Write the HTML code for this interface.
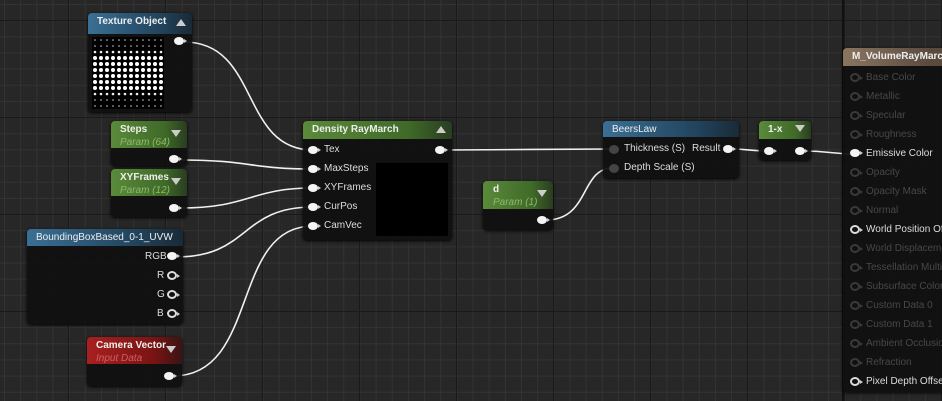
<!DOCTYPE html>
<html><head><meta charset="utf-8"><style>
*{margin:0;padding:0;box-sizing:border-box}
body{width:942px;height:401px;overflow:hidden;position:relative;font-family:"Liberation Sans",sans-serif;font-size:10px;color:#ddd;
background-color:#272727;
background-image:
linear-gradient(90deg,#1a1a1a 1px,transparent 1px),
linear-gradient(0deg,#1a1a1a 1px,transparent 1px),
linear-gradient(90deg,#333 1px,transparent 1px),
linear-gradient(0deg,#333 1px,transparent 1px);
background-size:97px 97px,97px 97px,16.17px 16.17px,16.17px 16.17px;
background-position:68px 0,0 21px,4px 0,0 5px;}
.n{position:absolute;background:rgba(16,16,16,.94);border-radius:4px;box-shadow:0 1px 3px #000}
.h{position:absolute;left:0;right:0;top:0;border-radius:4px 4px 0 0;padding:3px 0 0 9px;font-weight:bold;color:#eee;font-size:10px}
.blue{background:linear-gradient(90deg,#3a6f94,#21435c 70%,#1a2a36)}
.green{background:linear-gradient(90deg,#5a8a3a,#3f6a28 70%,#2a3d20)}
.red{background:linear-gradient(90deg,#a82020,#7a1414 70%,#3a1414)}
.brown{background:linear-gradient(90deg,#8a7560,#5a4a3e 80%)}
.sub{font-style:italic;font-weight:normal;color:#8fb86a;font-size:10px;margin-top:2px}
.tri{position:absolute;right:6px;top:7px;width:0;height:0;border-left:5px solid transparent;border-right:5px solid transparent}
.up{border-bottom:7px solid #ccc}.dn{border-top:7px solid #ccc}
.p{position:absolute;width:10px;height:8px;margin:-1px 0 0 -1px;border-radius:50%;background:#f4f4f4}
.p::after{content:"";position:absolute;right:-3px;top:2px;border-left:3px solid #ccc;border-top:2px solid transparent;border-bottom:2px solid transparent}
.o{position:absolute;width:10px;height:9px;margin:-1px 0 0 -1px;border-radius:50%;border:2px solid #ddd}
.o::after{content:"";position:absolute;right:-5px;top:1px;border-left:3px solid #ccc;border-top:2px solid transparent;border-bottom:2px solid transparent}
.g{position:absolute;width:10px;height:9px;border-radius:50%;background:#444}
.t{position:absolute;font-size:10px;color:#ddd;white-space:nowrap}
.dim{color:#484848}
.dim2{border-color:#3a3a3a!important}
.dim2::after{border-left-color:#3a3a3a}
</style></head><body>
<svg width="942" height="401" style="position:absolute;left:0;top:0" fill="none" stroke="#f0f0f0" stroke-width="1.6">
<path d="M184 42 C260 42,240 150,313 150"/>
<path d="M180 160 C250 160,250 169,313 169"/>
<path d="M180 208 C250 208,250 188,313 188"/>
<path d="M176 257 C250 257,240 207,313 207"/>
<path d="M173 376 C260 376,230 226,313 226"/>
<path d="M444 150 C520 150,540 149,613 149"/>
<path d="M546 220 C590 220,580 168,613 168"/>
<path d="M730 149 C750 149,750 151,769 151"/>
<path d="M804 151 C830 151,830 154,856 154"/>
</svg>
<div style="position:absolute;left:842px;top:0;width:2px;height:401px;background:#111"></div>

<div class="n" style="left:88px;top:13px;width:104px;height:99px">
<div class="h blue" style="height:21px">Texture Object</div><div class="tri up" style="top:6px"></div>
<svg style="position:absolute;left:4px;top:24px" width="72" height="72"><rect width="72" height="72" fill="#000"/>
<defs>
<pattern id="s" width="6" height="6" patternUnits="userSpaceOnUse"><circle cx="3" cy="3" r="0.8" fill="#ccc"/></pattern>
<pattern id="b" width="6" height="6" patternUnits="userSpaceOnUse"><circle cx="3" cy="3" r="2" fill="#fff"/></pattern>
<pattern id="m" width="6" height="6" patternUnits="userSpaceOnUse"><circle cx="3" cy="3" r="1.3" fill="#eee"/></pattern>
</defs>
<rect x="0" y="0" width="72" height="12" fill="url(#s)"/>
<rect x="0" y="12" width="72" height="6" fill="url(#m)"/>
<rect x="0" y="18" width="72" height="36" fill="url(#b)"/>
<rect x="0" y="54" width="72" height="6" fill="url(#m)"/>
<rect x="0" y="60" width="72" height="12" fill="url(#s)"/>
</svg>
<div class="p" style="left:87px;top:25px"></div>
</div>

<div class="n" style="left:111px;top:121px;width:76px;height:45px">
<div class="h green" style="height:27px">Steps<div class="sub">Param (64)</div></div><div class="tri dn" style="top:9px"></div>
<div class="p" style="left:59px;top:35px"></div></div>
<div class="n" style="left:111px;top:169px;width:76px;height:48px">
<div class="h green" style="height:27px">XYFrames<div class="sub">Param (12)</div></div><div class="tri dn" style="top:9px"></div>
<div class="p" style="left:59px;top:36px"></div></div>

<div class="n" style="left:27px;top:229px;width:156px;height:95px">
<div class="h blue" style="height:17px;font-weight:normal">BoundingBoxBased_0-1_UVW</div>
<div class="t" style="left:118px;top:22px">RGB</div><div class="p" style="left:141px;top:24px"></div>
<div class="t" style="left:130px;top:41px">R</div><div class="o" style="left:141px;top:43px"></div>
<div class="t" style="left:130px;top:60px">G</div><div class="o" style="left:141px;top:62px"></div>
<div class="t" style="left:130px;top:79px">B</div><div class="o" style="left:141px;top:81px"></div>
</div>

<div class="n" style="left:87px;top:337px;width:95px;height:49px">
<div class="h red" style="height:27px">Camera Vector<div class="sub" style="color:#d06060">Input Data</div></div><div class="tri dn" style="top:9px"></div>
<div class="p" style="left:78px;top:36px"></div></div>

<div class="n" style="left:303px;top:121px;width:149px;height:119px">
<div class="h green" style="height:18px">Density RayMarch</div><div class="tri up" style="top:5px"></div>
<div style="position:absolute;left:73px;top:42px;width:72px;height:73px;background:#000"></div>
<div class="p" style="left:6px;top:26px"></div><div class="t" style="left:21px;top:23px">Tex</div>
<div class="p" style="left:133px;top:26px"></div>
<div class="p" style="left:6px;top:45px"></div><div class="t" style="left:21px;top:42px">MaxSteps</div>
<div class="p" style="left:6px;top:64px"></div><div class="t" style="left:21px;top:61px">XYFrames</div>
<div class="p" style="left:6px;top:83px"></div><div class="t" style="left:21px;top:80px">CurPos</div>
<div class="p" style="left:6px;top:102px"></div><div class="t" style="left:21px;top:99px">CamVec</div>
</div>

<div class="n" style="left:483px;top:181px;width:70px;height:49px">
<div class="h green" style="height:28px;padding-left:10px">d<div class="sub">Param (1)</div></div><div class="tri dn" style="top:9px"></div>
<div class="p" style="left:55px;top:36px"></div></div>

<div class="n" style="left:603px;top:121px;width:136px;height:57px">
<div class="h blue" style="height:16px;font-weight:normal">BeersLaw</div>
<div class="g" style="left:6px;top:24px"></div><div class="t" style="left:21px;top:22px">Thickness (S)</div>
<div class="t" style="left:89px;top:22px">Result</div><div class="p" style="left:121px;top:25px"></div>
<div class="g" style="left:6px;top:43px"></div><div class="t" style="left:21px;top:41px">Depth Scale (S)</div>
</div>

<div class="n" style="left:759px;top:121px;width:52px;height:39px">
<div class="h green" style="height:18px">1-x</div><div class="tri dn" style="top:4px"></div>
<div class="p" style="left:6px;top:27px"></div><div class="p" style="left:37px;top:27px"></div></div>

<div class="n" style="left:843px;top:48px;width:110px;height:344px;border-radius:4px 0 0 4px">
<div class="h brown" style="height:18px">M_VolumeRayMarch_</div>
<div class="o dim2" style="left:8px;top:26px"></div><div class="t dim" style="left:23px;top:24px">Base Color</div>
<div class="o dim2" style="left:8px;top:45px"></div><div class="t dim" style="left:23px;top:43px">Metallic</div>
<div class="o dim2" style="left:8px;top:64px"></div><div class="t dim" style="left:23px;top:62px">Specular</div>
<div class="o dim2" style="left:8px;top:83px"></div><div class="t dim" style="left:23px;top:81px">Roughness</div>
<div class="p" style="left:8px;top:102px"></div><div class="t" style="left:23px;top:100px">Emissive Color</div>
<div class="o dim2" style="left:8px;top:121px"></div><div class="t dim" style="left:23px;top:119px">Opacity</div>
<div class="o dim2" style="left:8px;top:140px"></div><div class="t dim" style="left:23px;top:138px">Opacity Mask</div>
<div class="o dim2" style="left:8px;top:159px"></div><div class="t dim" style="left:23px;top:157px">Normal</div>
<div class="o" style="left:8px;top:178px"></div><div class="t" style="left:23px;top:176px">World Position Offset</div>
<div class="o dim2" style="left:8px;top:197px"></div><div class="t dim" style="left:23px;top:195px">World Displacement</div>
<div class="o dim2" style="left:8px;top:216px"></div><div class="t dim" style="left:23px;top:214px">Tessellation Multiplier</div>
<div class="o dim2" style="left:8px;top:235px"></div><div class="t dim" style="left:23px;top:233px">Subsurface Color</div>
<div class="o dim2" style="left:8px;top:254px"></div><div class="t dim" style="left:23px;top:252px">Custom Data 0</div>
<div class="o dim2" style="left:8px;top:273px"></div><div class="t dim" style="left:23px;top:271px">Custom Data 1</div>
<div class="o dim2" style="left:8px;top:292px"></div><div class="t dim" style="left:23px;top:290px">Ambient Occlusion</div>
<div class="o dim2" style="left:8px;top:311px"></div><div class="t dim" style="left:23px;top:309px">Refraction</div>
<div class="o" style="left:8px;top:330px"></div><div class="t" style="left:23px;top:328px">Pixel Depth Offset</div>
</div>
</body></html>
